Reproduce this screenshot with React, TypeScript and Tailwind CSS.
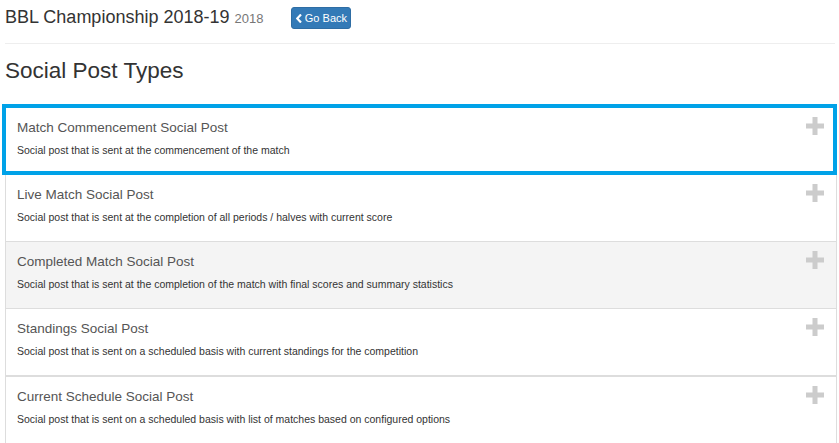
import React from 'react';

const postTypes = [
    { title: 'Match Commencement Social Post', desc: 'Social post that is sent at the commencement of the match' },
    { title: 'Live Match Social Post', desc: 'Social post that is sent at the completion of all periods / halves with current score' },
    { title: 'Completed Match Social Post', desc: 'Social post that is sent at the completion of the match with final scores and summary statistics' },
    { title: 'Standings Social Post', desc: 'Social post that is sent on a scheduled basis with current standings for the competition' },
    { title: 'Current Schedule Social Post', desc: 'Social post that is sent on a scheduled basis with list of matches based on configured options' },
];

function PlusIcon() {
    return (
        <svg width="18" height="18" viewBox="0 0 18 18" className="shrink-0 -mt-px">
            <path d="M6.5 0h5v6.5H18v5h-6.5V18h-5v-6.5H0v-5h6.5z" fill="#cccccc" />
        </svg>
    );
}

export default function App() {
    return (
        <div
            className="min-h-screen bg-white pl-[5px] pr-[2px] pt-[7px] overflow-hidden"
            style={{ fontFamily: '"Liberation Sans", Arial, sans-serif' }}
        >
            {/* Page header */}
            <div className="flex items-center h-[22px]">
                <h1 className="text-[18px] leading-[22px] text-[#333333] font-normal">
                    BBL Championship 2018-19 <span className="text-[13px] text-[#777777]">2018</span>
                </h1>
                <button className="ml-[28px] h-[22px] w-[60px] flex items-center justify-center gap-[2px] rounded-[3px] bg-[#337ab7] border border-[#2e6da4] text-white text-[11px]">
                    <svg width="7" height="9" viewBox="0 0 7 9">
                        <path d="M5 0.5L1.2 4.5L5 8.5" stroke="white" strokeWidth="2.2" fill="none" />
                    </svg>
                    Go Back
                </button>
            </div>
            <div className="mt-[14px] mr-[2px] border-t border-[#eeeeee]" />

            <h3 className="mt-[14px] text-[22.5px] leading-[26px] text-[#333333] font-normal">Social Post Types</h3>

            {/* List of post types */}
            <div className="mt-[20px] border-l border-r border-[#dddddd]">
                {postTypes.map((p, i) => (
                    <div
                        key={p.title}
                        className={
                            i === 0
                                ? 'flex justify-between -ml-[4px] -mr-px border-4 border-[#00a2e8] pl-[11px] pr-[9px] pt-[10px] pb-[13px] bg-white'
                                : i === 2
                                ? 'flex justify-between pl-[11px] pr-[12px] pt-[10px] pb-[16px] bg-[#f4f4f4] border-b border-[#dddddd]'
                                : i === 3
                                ? 'flex justify-between pl-[11px] pr-[12px] pt-[10px] pb-[16px] bg-white border-b-2 border-[#dddddd]'
                                : 'flex justify-between pl-[11px] pr-[12px] pt-[10px] pb-[16px] bg-white border-b border-[#dddddd]'
                        }
                    >
                        <div>
                            <div className="text-[13.5px] leading-[20px] text-[#555555]">{p.title}</div>
                            <div className="mt-[4px] text-[10.5px] leading-[16px] text-[#333333]">{p.desc}</div>
                        </div>
                        <PlusIcon />
                    </div>
                ))}
            </div>
        </div>
    );
}
